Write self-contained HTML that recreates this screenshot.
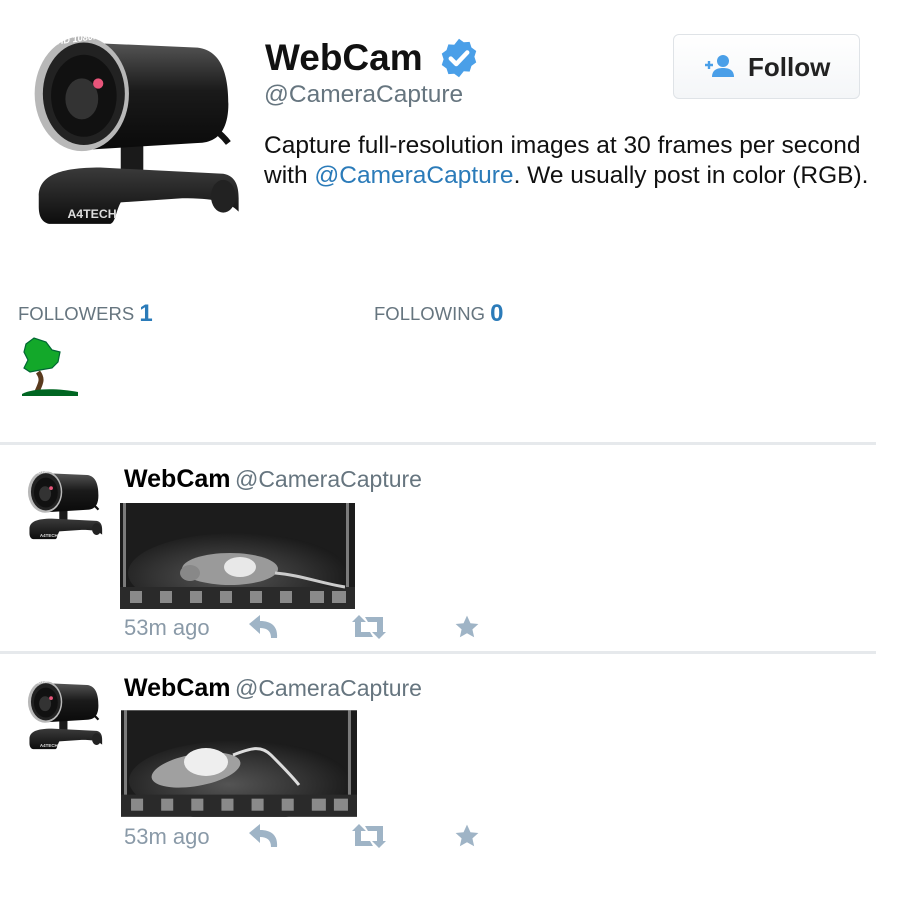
<!DOCTYPE html>
<html><head><meta charset="utf-8">
<style>
*{margin:0;padding:0;box-sizing:border-box}
body{width:904px;height:904px;background:#fff;position:relative;overflow:hidden;font-family:"Liberation Sans",Arial,sans-serif}
.a{position:absolute;white-space:nowrap}
.div{position:absolute;left:0;width:876px;height:3px;background:#e6e9ec}
.name{font-weight:bold;font-size:25px;color:#000}
.handle{font-size:23px;color:#66757f}
.ts{font-size:22px;color:#8a9aa8}
.blue{color:#2b7bb9}
</style></head><body>
<svg width="0" height="0" style="position:absolute">
<defs>
<linearGradient id="bd" x1="0" y1="0" x2="0" y2="1"><stop offset="0" stop-color="#555"/><stop offset=".45" stop-color="#1a1a1a"/><stop offset="1" stop-color="#0a0a0a"/></linearGradient>
<linearGradient id="bs" x1="0" y1="0" x2="0" y2="1"><stop offset="0" stop-color="#3a3a3a"/><stop offset="1" stop-color="#0d0d0d"/></linearGradient>
<radialGradient id="rg" cx=".45" cy=".55" r=".6"><stop offset="0" stop-color="#6c6c6c"/><stop offset=".6" stop-color="#3a3a3a"/><stop offset="1" stop-color="#151515"/></radialGradient>
<symbol id="cam" viewBox="0 0 220 200">
<path d="M150 85 C180 95 195 105 205 118" stroke="#111" stroke-width="6" fill="none"/>
<rect x="100" y="115" width="22" height="45" rx="6" fill="#1a1a1a"/>
<path d="M20 170 C20 150 40 142 80 142 L200 148 C212 150 215 160 215 172 L215 185 C205 175 190 172 160 172 L100 176 C95 185 95 195 90 197 L30 197 C22 195 20 188 20 180 Z" fill="url(#bs)"/>
<ellipse cx="200" cy="170" rx="12" ry="16" fill="#222"/>
<path d="M60 20 L175 25 C200 28 205 55 205 80 C205 105 195 118 175 118 L60 125 Z" fill="url(#bd)"/>
<ellipse cx="62" cy="70" rx="46" ry="56" fill="#b8b8b8"/>
<ellipse cx="64" cy="70" rx="40" ry="50" fill="#222"/>
<ellipse cx="64" cy="72" rx="32" ry="40" fill="#111"/>
<ellipse cx="62" cy="75" rx="16" ry="20" fill="#333"/>
<circle cx="78" cy="60" r="5" fill="#e8557a"/>
<text x="38" y="22" font-size="9" fill="#fff" font-weight="bold" font-style="italic" transform="rotate(-8 38 22)">HD 1080P</text>
<text x="48" y="191" font-size="12" fill="#ddd" font-weight="bold">A4TECH</text>
</symbol>
<symbol id="rat" viewBox="0 0 235 106">
<rect width="235" height="106" fill="#1c1c1c"/>
<ellipse cx="118" cy="70" rx="110" ry="40" fill="url(#rg)" opacity=".7"/>
<rect x="3" y="0" width="3" height="96" fill="#bbb" opacity=".6"/>
<rect x="226" y="0" width="3" height="96" fill="#bbb" opacity=".6"/>
<rect x="0" y="84" width="235" height="22" fill="#2a2a2a"/>
<g fill="#8a8a8a"><rect x="10" y="88" width="12" height="12"/><rect x="40" y="88" width="12" height="12"/><rect x="70" y="88" width="12" height="12"/><rect x="100" y="88" width="12" height="12"/><rect x="130" y="88" width="12" height="12"/><rect x="160" y="88" width="12" height="12"/><rect x="190" y="88" width="14" height="12"/><rect x="212" y="88" width="14" height="12"/></g>
</symbol>
</defs></svg>

<!-- header -->
<svg class="a" style="left:18px;top:22px" width="226" height="205"><use href="#cam"/></svg>
<div class="a" style="left:265px;top:37px;font-size:37px;font-weight:bold;color:#111">WebCam</div>
<svg class="a" style="left:437px;top:36px" width="44" height="44" viewBox="0 0 24 24"><path d="M12 1.5l2.6 1.9 3.2-.2 1 3.1 2.6 1.9-1 3.1 1 3.1-2.6 1.9-1 3.1-3.2-.2L12 22.5l-2.6-1.9-3.2.2-1-3.1-2.6-1.9 1-3.1-1-3.1 2.6-1.9 1-3.1 3.2.2z" fill="#4a9fe8"/><path d="M7.5 12.3l3 3 6-6.3" stroke="#fff" stroke-width="2.4" fill="none" stroke-linecap="round" stroke-linejoin="round"/></svg>
<div class="a handle" style="left:264px;top:81px;font-size:24.5px">@CameraCapture</div>
<div class="a" style="left:264px;top:131px;font-size:24.5px;color:#111;line-height:30px">Capture full-resolution images at 30 frames per second<br>with <span class="blue">@CameraCapture</span>. We usually post in color (RGB).</div>
<div class="a" style="left:673px;top:34px;width:187px;height:65px;border:1px solid #dfe3e7;border-radius:6px;background:linear-gradient(#fff,#f4f6f8)"></div>
<svg class="a" style="left:703px;top:54px" width="34" height="24" viewBox="0 0 34 24"><path d="M2 11h8M6 7v8" stroke="#4a9fe8" stroke-width="2.4"/><circle cx="20" cy="7" r="6" fill="#4a9fe8"/><path d="M9 23c0-7 5-9 11-9s11 2 11 9z" fill="#4a9fe8"/></svg>
<div class="a" style="left:748px;top:52px;font-size:26px;font-weight:bold;color:#222">Follow</div>

<div class="a" style="left:18px;top:299px;font-size:18.5px;color:#66757f">FOLLOWERS <span class="blue" style="font-size:24px;font-weight:bold;position:relative;top:1px">1</span></div>
<div class="a" style="left:374px;top:299px;font-size:18.5px;color:#66757f">FOLLOWING <span class="blue" style="font-size:24px;font-weight:bold;position:relative;top:1px">0</span></div>
<svg class="a" style="left:18px;top:336px" width="62" height="62" viewBox="0 0 62 62"><path d="M18 58 C22 48 26 44 20 36" stroke="#5a3a1e" stroke-width="5" fill="none"/><path d="M8 8 L16 2 L28 6 L34 14 L42 16 L40 26 L34 32 L22 34 L12 36 L6 32 L10 24 L6 16 Z" fill="#13a82a" stroke="#063" stroke-width="1.2"/><path d="M4 58 C14 52 40 52 60 56 L60 60 L4 60Z" fill="#062"/></svg>

<div class="div" style="top:442px"></div>

<!-- tweet 1 -->
<svg class="a" style="left:22px;top:460px" width="82" height="86"><use href="#cam"/></svg>
<div class="a" style="left:124px;top:465px"><span class="name">WebCam</span> <span class="handle">@CameraCapture</span></div>
<svg class="a" style="left:120px;top:503px" width="235" height="106"><use href="#rat"/><ellipse cx="110" cy="66" rx="48" ry="16" fill="#9a9a9a"/><ellipse cx="120" cy="64" rx="16" ry="10" fill="#e8e8e8"/><ellipse cx="70" cy="70" rx="10" ry="8" fill="#888"/><path d="M155 70 C180 72 200 80 225 84" stroke="#ccc" stroke-width="3" fill="none"/></svg>
<div class="a ts" style="left:124px;top:615px">53m ago</div>
<svg class="a" style="left:248px;top:614px" width="32" height="26" viewBox="0 0 32 26"><path d="M1 10 L12 1 V7 C24 7 30 13 29 24 L23 24 C23 17 19 14 12 14 V20 Z" fill="#9fb4c6"/></svg>
<svg class="a" style="left:351px;top:614px" width="36" height="26" viewBox="0 0 36 26"><path d="M8 1 L15 8 H10 V18 H19 L22 23 H4 V8 H1 Z M28 25 L21 18 H26 V8 H17 L14 3 H32 V18 H35 Z" fill="#9fb4c6"/></svg>
<svg class="a" style="left:453px;top:614px" width="28" height="26" viewBox="0 0 24 24"><path d="M12 1.5l3.2 7 7.3.7-5.5 5 1.6 7.3L12 17.8 5.4 21.5 7 14.2l-5.5-5 7.3-.7z" fill="#9fb4c6"/></svg>

<div class="div" style="top:651px"></div>

<!-- tweet 2 -->
<svg class="a" style="left:22px;top:670px" width="82" height="86"><use href="#cam"/></svg>
<div class="a" style="left:124px;top:674px"><span class="name">WebCam</span> <span class="handle">@CameraCapture</span></div>
<svg class="a" style="left:121px;top:710px" width="236" height="107"><use href="#rat"/><ellipse cx="75" cy="60" rx="45" ry="16" fill="#a0a0a0" transform="rotate(-10 75 60)"/><ellipse cx="85" cy="52" rx="22" ry="14" fill="#eee"/><path d="M112 45 C130 38 140 35 150 45 C160 55 170 65 178 75" stroke="#ddd" stroke-width="3" fill="none"/></svg>
<div class="a ts" style="left:124px;top:824px">53m ago</div>
<svg class="a" style="left:248px;top:823px" width="32" height="26" viewBox="0 0 32 26"><path d="M1 10 L12 1 V7 C24 7 30 13 29 24 L23 24 C23 17 19 14 12 14 V20 Z" fill="#9fb4c6"/></svg>
<svg class="a" style="left:351px;top:823px" width="36" height="26" viewBox="0 0 36 26"><path d="M8 1 L15 8 H10 V18 H19 L22 23 H4 V8 H1 Z M28 25 L21 18 H26 V8 H17 L14 3 H32 V18 H35 Z" fill="#9fb4c6"/></svg>
<svg class="a" style="left:453px;top:823px" width="28" height="26" viewBox="0 0 24 24"><path d="M12 1.5l3.2 7 7.3.7-5.5 5 1.6 7.3L12 17.8 5.4 21.5 7 14.2l-5.5-5 7.3-.7z" fill="#9fb4c6"/></svg>
</body></html>
